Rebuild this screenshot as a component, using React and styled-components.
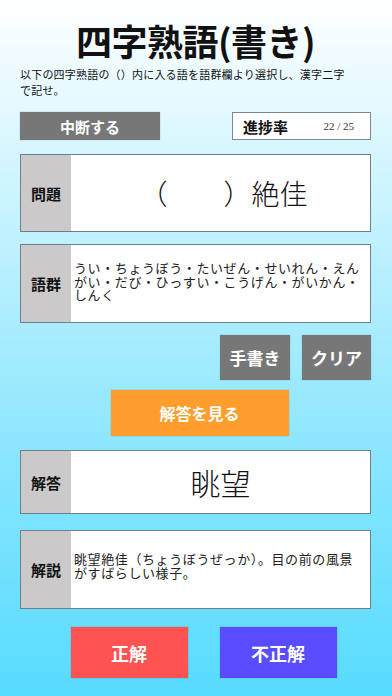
import React from "react";
import styled, { createGlobalStyle } from "styled-components";

const GlobalStyle = createGlobalStyle`
  html, body {
    margin: 0;
    padding: 0;
  }
  body {
    font-family: "Liberation Serif", "Noto Sans CJK JP", serif;
    color: #111;
  }
`;

const Page = styled.div`
  width: 392px;
  height: 696px;
  box-sizing: border-box;
  padding: 14px 21px 0 20px;
  background: linear-gradient(180deg, #ffffff 0%, #d6f6ff 22%, #a8ecff 48%, #7fe4ff 72%, #57dbff 100%);
  display: flex;
  flex-direction: column;
  overflow: hidden;
`;

const Title = styled.h1`
  margin: 0;
  text-align: center;
  font-family: "Noto Sans CJK JP", sans-serif;
  font-size: 36px;
  font-weight: 700;
  line-height: 52px;
  letter-spacing: -0.5px;
`;

const Lead = styled.p`
  margin: 0;
  font-family: "Noto Sans CJK JP", sans-serif;
  font-size: 11px;
  line-height: 16px;
  letter-spacing: 0.2px;
`;

const TopRow = styled.div`
  display: flex;
  justify-content: space-between;
  margin-top: 14px;
  height: 28px;
`;

const GrayButton = styled.button`
  border: none;
  background: #777777;
  color: #fff;
  font-family: "Noto Sans CJK JP", sans-serif;
  font-weight: 700;
  font-size: ${(p) => p.$size || 15}px;
  width: ${(p) => p.$w}px;
  height: ${(p) => p.$h || 28}px;
  padding: 0;
  cursor: pointer;
  box-shadow: 0 0 1px rgba(0, 0, 0, 0.3);
`;

const Progress = styled.div`
  width: 139px;
  box-sizing: border-box;
  background: #fff;
  border: 1px solid #7d8890;
  display: flex;
  align-items: center;
  padding: 0 10px 0 10px;
  justify-content: space-between;
`;

const ProgressLabel = styled.span`
  font-family: "Noto Sans CJK JP", sans-serif;
  font-weight: 700;
  font-size: 15px;
`;

const ProgressValue = styled.span`
  font-family: "Liberation Serif", serif;
  font-size: 11px;
  color: #333;
  margin-right: 6px;
`;

const Card = styled.div`
  display: flex;
  height: ${(p) => p.$h}px;
  margin-top: ${(p) => p.$mt}px;
  background: #fff;
  border: 1px solid #6f7f88;
  box-sizing: border-box;
`;

const Label = styled.div`
  width: 50px;
  flex: none;
  background: #ccc9ca;
  display: flex;
  align-items: center;
  justify-content: center;
  font-family: "Noto Sans CJK JP", sans-serif;
  font-weight: 700;
  font-size: 15px;
`;

const BigText = styled.div`
  flex: 1;
  display: flex;
  align-items: center;
  justify-content: center;
  font-family: "Noto Sans CJK JP", sans-serif;
  font-size: ${(p) => p.$size}px;
  font-weight: 300;
  padding-left: ${(p) => p.$pl || 0}px;
`;

const BodyText = styled.div`
  flex: 1;
  padding: ${(p) => p.$pt}px 5px 0 3px;
  font-family: "Noto Sans CJK JP", sans-serif;
  font-size: 13px;
  line-height: 13.5px;
  letter-spacing: 0.6px;
  color: #222;
`;

const ToolRow = styled.div`
  display: flex;
  justify-content: flex-end;
  gap: 12px;
  margin-top: 12px;
`;

const CenterRow = styled.div`
  display: flex;
  justify-content: center;
  gap: ${(p) => p.$gap || 0}px;
  margin-top: ${(p) => p.$mt}px;
  padding-left: ${(p) => p.$pl || 0}px;
`;

const ColorButton = styled.button`
  border: none;
  background: ${(p) => p.$bg};
  color: #fff;
  width: ${(p) => p.$w}px;
  height: ${(p) => p.$h}px;
  padding: 0;
  font-family: "Noto Sans CJK JP", sans-serif;
  font-weight: 700;
  font-size: ${(p) => p.$size}px;
  cursor: pointer;
  box-shadow: 0 0 1px rgba(0, 0, 0, 0.35);
`;

export default function App() {
  return (
    <>
      <GlobalStyle />
      <Page>
        <Title>四字熟語(書き)</Title>
        <Lead>
          以下の四字熟語の（）内に入る語を語群欄より選択し、漢字二字
          <br />
          で記せ。
        </Lead>
        <TopRow>
          <GrayButton $w={140}>中断する</GrayButton>
          <Progress>
            <ProgressLabel>進捗率</ProgressLabel>
            <ProgressValue>22 / 25</ProgressValue>
          </Progress>
        </TopRow>
        <Card $h={78} $mt={14}>
          <Label>問題</Label>
          <BigText $size={28} $pl={6}>（　　）絶佳</BigText>
        </Card>
        <Card $h={79} $mt={12}>
          <Label>語群</Label>
          <BodyText $pt={16}>
            うい・ちょうぼう・たいぜん・せいれん・えんがい・だび・ひっすい・こうげん・がいかん・しんく
          </BodyText>
        </Card>
        <ToolRow>
          <GrayButton $w={70} $h={45} $size={17}>手書き</GrayButton>
          <GrayButton $w={69} $h={45} $size={17}>クリア</GrayButton>
        </ToolRow>
        <CenterRow $mt={10} $pl={8}>
          <ColorButton $bg="#ff9e2c" $w={178} $h={46} $size={16}>解答を見る</ColorButton>
        </CenterRow>
        <Card $h={64} $mt={14}>
          <Label>解答</Label>
          <BigText $size={30}>眺望</BigText>
        </Card>
        <Card $h={79} $mt={16}>
          <Label>解説</Label>
          <BodyText $pt={21}>
            眺望絶佳（ちょうぼうぜっか）。目の前の風景がすばらしい様子。
          </BodyText>
        </Card>
        <CenterRow $mt={18} $gap={32} $pl={16}>
          <ColorButton $bg="#ff5252" $w={117} $h={51} $size={18}>正解</ColorButton>
          <ColorButton $bg="#5a4cff" $w={117} $h={51} $size={18}>不正解</ColorButton>
        </CenterRow>
      </Page>
    </>
  );
}
